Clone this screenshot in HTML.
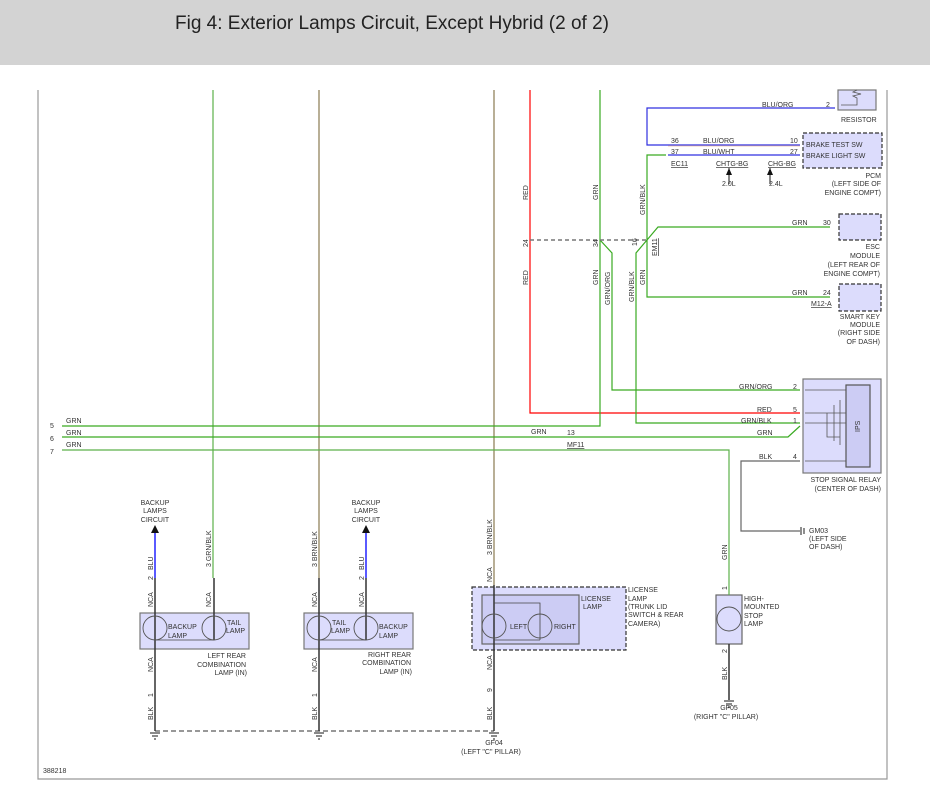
<!DOCTYPE html>
<html><head><meta charset="utf-8"><style>
html,body{margin:0;padding:0;background:#fff}
.hd{position:absolute;left:0;top:0;width:930px;height:65px;background:#d3d3d3}
.hd span{position:absolute;left:175px;top:13px;font:19px "Liberation Sans",sans-serif;color:#222;letter-spacing:0}
svg{position:absolute;left:0;top:0}
text{font-family:"Liberation Sans",sans-serif;font-size:7px;fill:#333}
</style></head><body>
<div class="hd"><span>Fig 4: Exterior Lamps Circuit, Except Hybrid (2 of 2)</span></div>
<svg width="930" height="804" viewBox="0 0 930 804">
<g fill="none" stroke-width="1.2">
<path d="M38 90V779H887V90" stroke="#999"/>
<rect x="838" y="90" width="38" height="20" fill="#dcdcfc" stroke="#777"/>
<path d="M841 105H857V98L853 96L861 94L853 92L857 90" stroke="#555" stroke-width="0.8"/>
<rect x="803" y="133" width="79" height="35" fill="#dcdcfc" stroke="#333" stroke-dasharray="4,2"/>
<rect x="839" y="214" width="42" height="26" fill="#dcdcfc" stroke="#333" stroke-dasharray="4,2"/>
<rect x="839" y="284" width="42" height="27" fill="#dcdcfc" stroke="#333" stroke-dasharray="4,2"/>
<rect x="803" y="379" width="78" height="94" fill="#dcdcfc" stroke="#777"/>
<rect x="846" y="385" width="24" height="82" fill="#ccccf4" stroke="#555"/>
<rect x="140" y="613" width="109" height="36" fill="#dcdcfc" stroke="#777"/>
<rect x="304" y="613" width="109" height="36" fill="#dcdcfc" stroke="#777"/>
<rect x="472" y="587" width="154" height="63" fill="#dcdcfc" stroke="#333" stroke-dasharray="4,2"/>
<rect x="482" y="595" width="97" height="49" fill="#ccccf4" stroke="#666"/>
<rect x="716" y="595" width="26" height="49" fill="#dcdcfc" stroke="#666"/>
<path d="M213 90V578" stroke="#5cb04a"/>
<path d="M319 90V578" stroke="#8a7a50"/>
<path d="M494 90V585" stroke="#8a7a50"/>
<path d="M530 90V413H800" stroke="#f00"/>
<path d="M600 90V426H62" stroke="#3aaa22"/>
<path d="M600 240L612 253V390H800" stroke="#3aaa22"/>
<path d="M666 155H647V297H830" stroke="#3aaa22"/>
<path d="M647 240L658 227H830" stroke="#3aaa22"/>
<path d="M647 240L636 253V423H800" stroke="#3aaa22"/>
<path d="M835 108H647V145H800" stroke="#3030e0"/>
<path d="M668 155H800" stroke="#3030e0"/>
<path d="M668 146H800" stroke="#e8a070" stroke-width="0.5"/>
<path d="M62 437H788L800 426" stroke="#3aaa22"/>
<path d="M62 450H729V595" stroke="#5cb04a"/>
<path d="M800 461H741V531H800" stroke="#666"/>
<path d="M805 390H846M805 413H846M805 423H846M805 461H846M827 413V437H840M827 423V437M834 405V441M840 400V445" stroke="#555" stroke-width="0.8"/>
<path d="M530 240H647" stroke="#777" stroke-dasharray="4,3" stroke-width="1.6"/>
<path d="M155 731H494" stroke="#777" stroke-dasharray="5,3" stroke-width="1.6"/>
<path d="M155 530V578" stroke="#22f" stroke-width="1.5"/>
<path d="M366 530V578" stroke="#22f" stroke-width="1.5"/>
<path d="M155 578V731M214 578V640M319 578V731M366 578V640M494 585V731M729 644V700" stroke="#333" stroke-width="1.5"/>
<path d="M155 640H214M319 640H366M494 603H540V640M494 640H540" stroke="#444" stroke-width="0.8"/>
<g stroke="#555" stroke-width="0.9">
<circle cx="155" cy="628" r="12"/><circle cx="214" cy="628" r="12"/>
<circle cx="319" cy="628" r="12"/><circle cx="366" cy="628" r="12"/>
<circle cx="494" cy="626" r="12"/><circle cx="540" cy="626" r="12"/>
<circle cx="729" cy="619" r="12"/>
</g>
<path d="M150 733H160M152 736H158M154 739H156M314 733H324M316 736H322M318 739H320M489 733H499M491 736H497M493 739H495M724 701H734M726 704H732M728 707H730M801 527V535M804 528V534" stroke="#444"/>
</g>
<path d="M151 533L155 525L159 533Z M362 533L366 525L370 533Z M726 175L729 168L732 175Z M767 175L770 168L773 175Z" fill="#111"/>
<path d="M729 168V184M770 168V184" stroke="#111"/>
<text x="50" y="428">5</text><text x="50" y="441">6</text><text x="50" y="454">7</text>
<text x="66" y="423">GRN</text><text x="66" y="435">GRN</text><text x="66" y="447">GRN</text>
<text x="531" y="434">GRN</text><text x="567" y="435">13</text><text x="567" y="447" text-decoration="underline">MF11</text>
<text x="762" y="107">BLU/ORG</text><text x="826" y="107">2</text>
<text x="841" y="122">RESISTOR</text>
<text x="671" y="143">36</text><text x="703" y="143">BLU/ORG</text><text x="790" y="143">10</text>
<text x="671" y="154">37</text><text x="703" y="154">BLU/WHT</text><text x="790" y="154">27</text>
<text x="806" y="147">BRAKE TEST SW</text><text x="806" y="158">BRAKE LIGHT SW</text>
<text x="671" y="166" text-decoration="underline">EC11</text>
<text x="716" y="166" text-decoration="underline">CHTG-BG</text>
<text x="768" y="166" text-decoration="underline">CHG-BG</text>
<text x="722" y="186">2.0L</text><text x="769" y="186">2.4L</text>
<text x="881" y="178" text-anchor="end">PCM</text>
<text x="881" y="186" text-anchor="end">(LEFT SIDE OF</text>
<text x="881" y="195" text-anchor="end">ENGINE COMPT)</text>
<text x="792" y="225">GRN</text><text x="823" y="225">30</text>
<text x="880" y="249" text-anchor="end">ESC</text>
<text x="880" y="258" text-anchor="end">MODULE</text>
<text x="880" y="267" text-anchor="end">(LEFT REAR OF</text>
<text x="880" y="276" text-anchor="end">ENGINE COMPT)</text>
<text x="792" y="295">GRN</text><text x="823" y="295">24</text>
<text x="811" y="306" text-decoration="underline">M12-A</text>
<text x="880" y="319" text-anchor="end">SMART KEY</text>
<text x="880" y="327" text-anchor="end">MODULE</text>
<text x="880" y="335" text-anchor="end">(RIGHT SIDE</text>
<text x="880" y="344" text-anchor="end">OF DASH)</text>
<text x="739" y="389">GRN/ORG</text><text x="793" y="389">2</text>
<text x="757" y="412">RED</text><text x="793" y="412">5</text>
<text x="741" y="423">GRN/BLK</text><text x="793" y="423">1</text>
<text x="757" y="435">GRN</text>
<text x="759" y="459">BLK</text><text x="793" y="459">4</text>
<text x="881" y="482" text-anchor="end">STOP SIGNAL RELAY</text>
<text x="881" y="491" text-anchor="end">(CENTER OF DASH)</text>
<text x="809" y="533">GM03</text><text x="809" y="541">(LEFT SIDE</text><text x="809" y="549">OF DASH)</text>
<text transform="translate(860,432) rotate(-90)">IPS</text>
<g>
<text transform="translate(528,200) rotate(-90)">RED</text>
<text transform="translate(528,285) rotate(-90)">RED</text>
<text transform="translate(528,247) rotate(-90)">24</text>
<text transform="translate(598,200) rotate(-90)">GRN</text>
<text transform="translate(598,285) rotate(-90)">GRN</text>
<text transform="translate(598,247) rotate(-90)">34</text>
<text transform="translate(610,305) rotate(-90)">GRN/ORG</text>
<text transform="translate(645,215) rotate(-90)">GRN/BLK</text>
<text transform="translate(634,302) rotate(-90)">GRN/BLK</text>
<text transform="translate(645,285) rotate(-90)">GRN</text>
<text transform="translate(637,246) rotate(-90)">16</text>
<text transform="translate(657,256) rotate(-90)" text-decoration="underline">EM11</text>
<text transform="translate(211,567) rotate(-90)">3  GRN/BLK</text>
<text transform="translate(317,567) rotate(-90)">3  BRN/BLK</text>
<text transform="translate(492,555) rotate(-90)">3  BRN/BLK</text>
<text transform="translate(153,580) rotate(-90)">2</text>
<text transform="translate(153,570) rotate(-90)">BLU</text>
<text transform="translate(364,580) rotate(-90)">2</text>
<text transform="translate(364,570) rotate(-90)">BLU</text>
<text transform="translate(153,607) rotate(-90)">NCA</text>
<text transform="translate(211,607) rotate(-90)">NCA</text>
<text transform="translate(317,607) rotate(-90)">NCA</text>
<text transform="translate(364,607) rotate(-90)">NCA</text>
<text transform="translate(492,582) rotate(-90)">NCA</text>
<text transform="translate(153,672) rotate(-90)">NCA</text>
<text transform="translate(317,672) rotate(-90)">NCA</text>
<text transform="translate(492,670) rotate(-90)">NCA</text>
<text transform="translate(153,697) rotate(-90)">1</text>
<text transform="translate(317,697) rotate(-90)">1</text>
<text transform="translate(492,692) rotate(-90)">9</text>
<text transform="translate(153,720) rotate(-90)">BLK</text>
<text transform="translate(317,720) rotate(-90)">BLK</text>
<text transform="translate(492,720) rotate(-90)">BLK</text>
<text transform="translate(727,560) rotate(-90)">GRN</text>
<text transform="translate(727,590) rotate(-90)">1</text>
<text transform="translate(727,653) rotate(-90)">2</text>
<text transform="translate(727,680) rotate(-90)">BLK</text>
</g>
<text x="155" y="505" text-anchor="middle">BACKUP</text><text x="155" y="513" text-anchor="middle">LAMPS</text><text x="155" y="522" text-anchor="middle">CIRCUIT</text>
<text x="366" y="505" text-anchor="middle">BACKUP</text><text x="366" y="513" text-anchor="middle">LAMPS</text><text x="366" y="522" text-anchor="middle">CIRCUIT</text>
<text x="168" y="629">BACKUP</text><text x="168" y="638">LAMP</text>
<text x="227" y="625">TAIL</text><text x="226" y="633">LAMP</text>
<text x="332" y="625">TAIL</text><text x="331" y="633">LAMP</text>
<text x="379" y="629">BACKUP</text><text x="379" y="638">LAMP</text>
<text x="246" y="658" text-anchor="end">LEFT REAR</text><text x="246" y="667" text-anchor="end">COMBINATION</text><text x="247" y="675" text-anchor="end">LAMP (IN)</text>
<text x="411" y="657" text-anchor="end">RIGHT REAR</text><text x="411" y="665" text-anchor="end">COMBINATION</text><text x="412" y="674" text-anchor="end">LAMP (IN)</text>
<text x="510" y="629">LEFT</text><text x="554" y="629">RIGHT</text>
<text x="581" y="601">LICENSE</text><text x="583" y="609">LAMP</text>
<text x="628" y="592">LICENSE</text><text x="628" y="601">LAMP</text><text x="628" y="609">(TRUNK LID</text><text x="628" y="617">SWITCH &amp; REAR</text><text x="628" y="626">CAMERA)</text>
<text x="744" y="601">HIGH-</text><text x="744" y="609">MOUNTED</text><text x="744" y="618">STOP</text><text x="744" y="626">LAMP</text>
<text x="729" y="710" text-anchor="middle">GF05</text><text x="726" y="719" text-anchor="middle">(RIGHT "C" PILLAR)</text>
<text x="494" y="745" text-anchor="middle">GF04</text><text x="491" y="754" text-anchor="middle">(LEFT "C" PILLAR)</text>
<text x="43" y="773">388218</text>
</svg>
</body></html>
